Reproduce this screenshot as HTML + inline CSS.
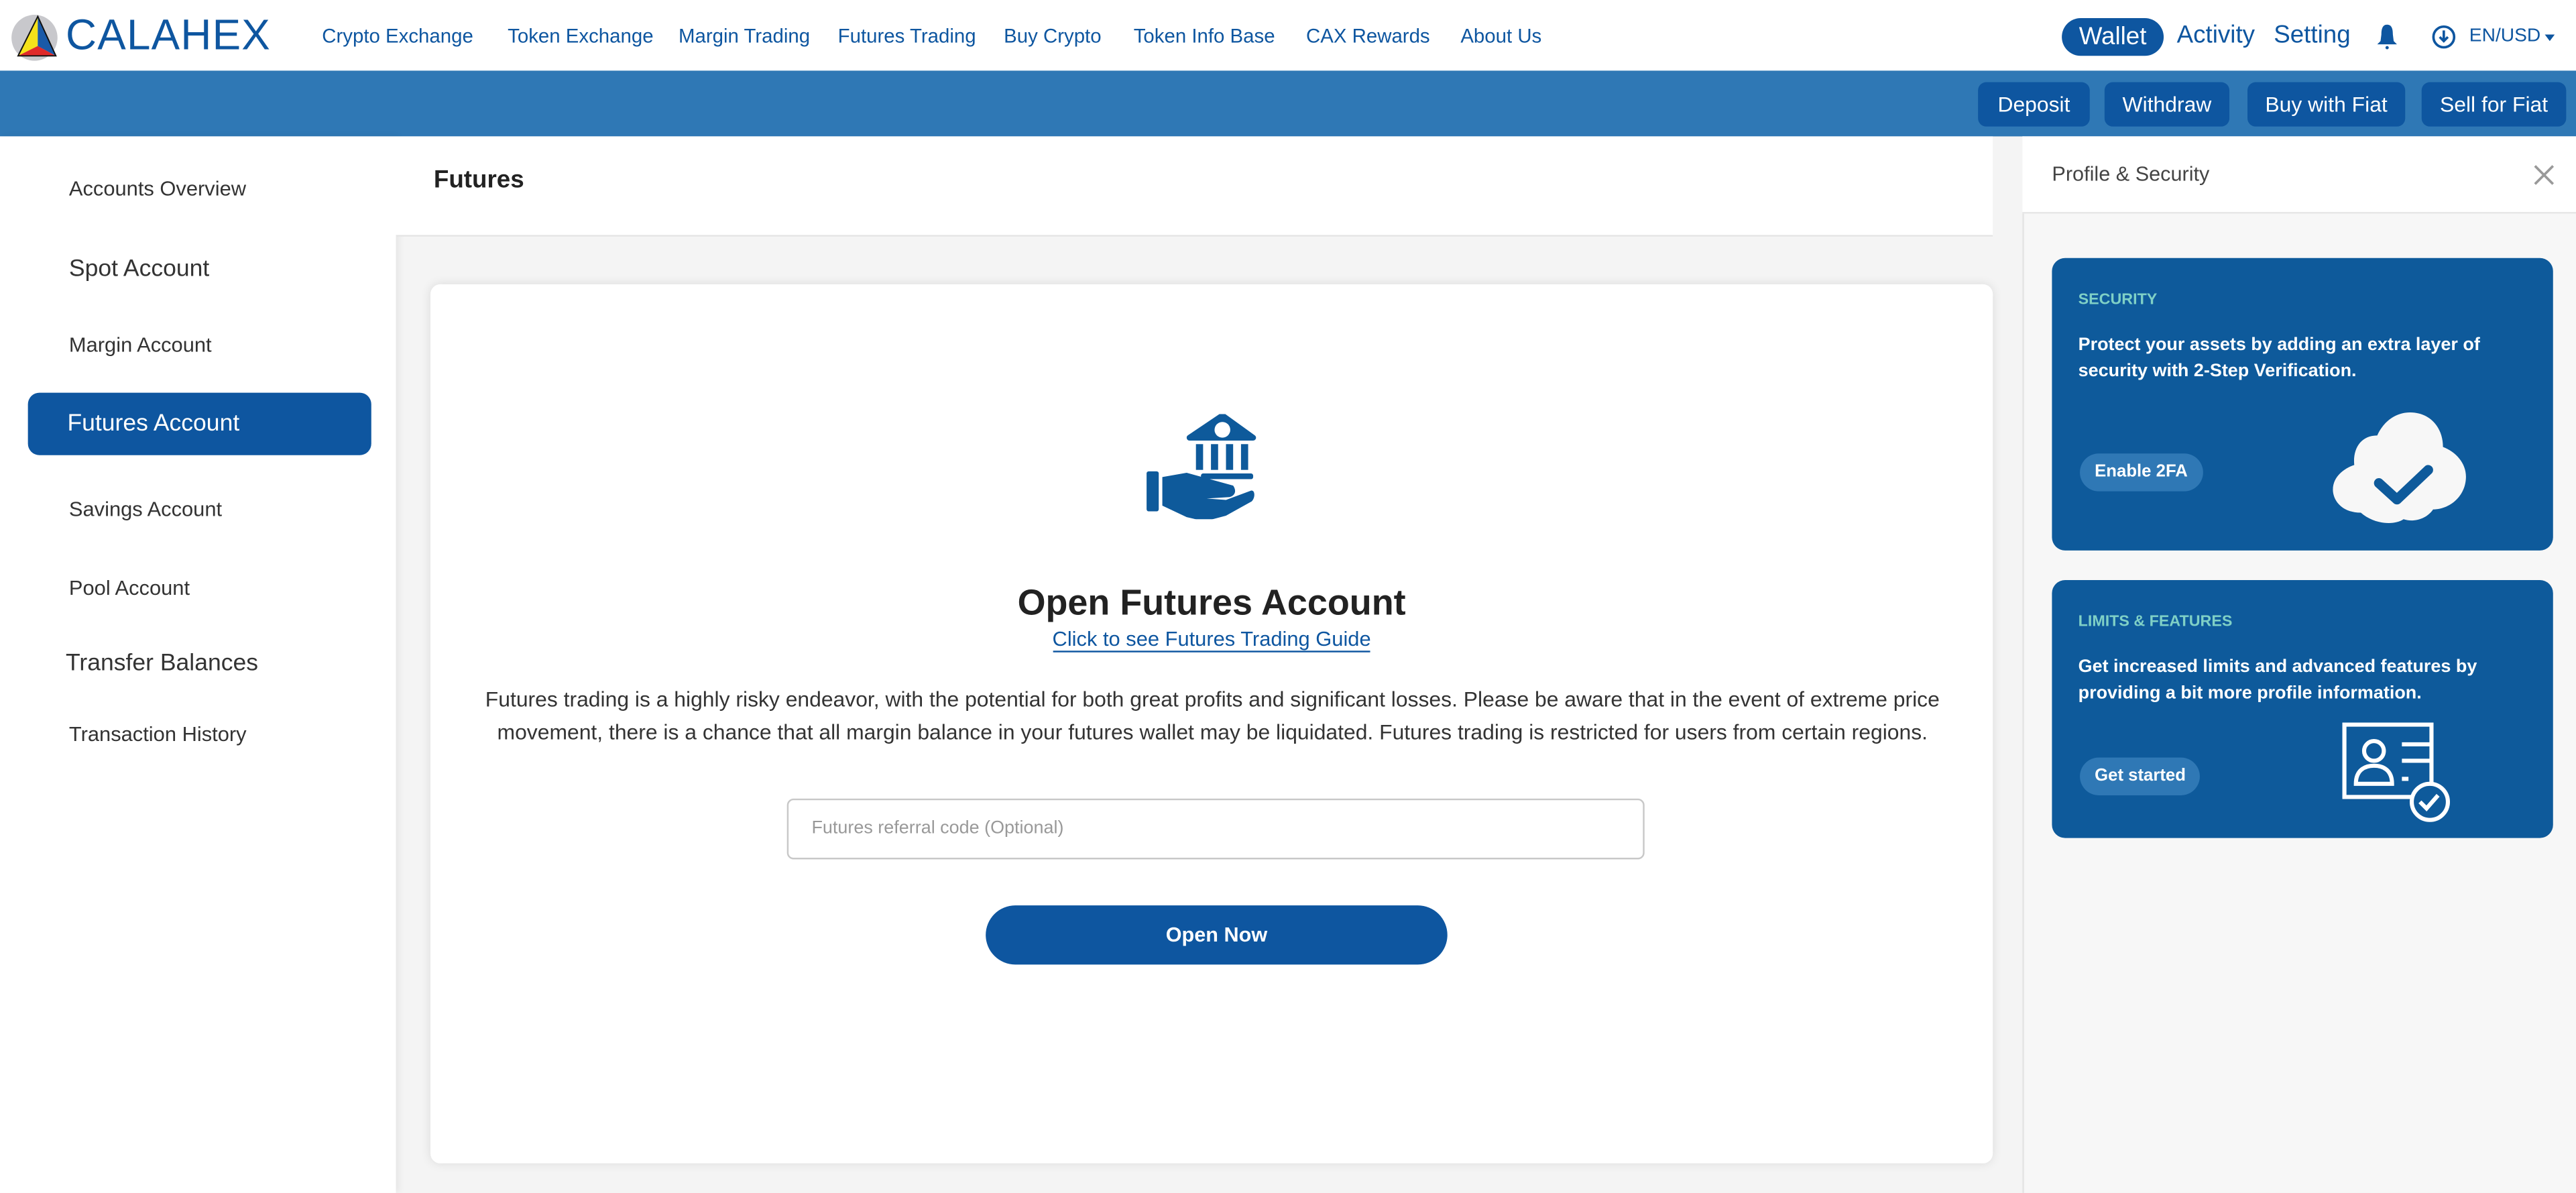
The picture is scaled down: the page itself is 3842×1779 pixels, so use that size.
<!DOCTYPE html>
<html><head><meta charset="utf-8"><style>
*{margin:0;padding:0;box-sizing:border-box}
html,body{width:3842px;height:1778px;overflow:hidden;background:#f5f5f5}
#w{position:absolute;left:0;top:0;width:1568px;height:726px;transform:scale(2.4503);transform-origin:0 0;font-family:"Liberation Sans",sans-serif;background:#f4f4f4}
.a{position:absolute}
.nav a{position:absolute;top:15px;font-size:12px;color:#0e56a0;text-decoration:none}
.btn{position:absolute;top:50px;height:27px;background:#0e56a0;color:#fff;border-radius:5px;font-size:13px;line-height:27px;text-align:center}
.side div{position:absolute;left:42px;color:#333;font-size:12.6px}
.card{position:absolute;left:1249px;width:305px;background:#0e5a9b;border-radius:8px;color:#fff}
.card .t{position:absolute;left:16px;font-size:9.5px;font-weight:bold;color:#7fd0c6}
.card .p{position:absolute;left:16px;font-size:11px;font-weight:bold;line-height:16px}
.card .b{position:absolute;left:17px;background:#2f78b5;border-radius:12px;font-size:10.5px;font-weight:bold;padding:0 9px;height:23px;line-height:23px}
</style></head><body><div id="w">
<div class="a" style="left:0;top:0;width:1568px;height:43px;background:#fff"></div>
<svg class="a" style="left:6px;top:6px" width="32" height="32" viewBox="0 0 32 32"><ellipse cx="15" cy="17" rx="14" ry="14" fill="#c8c8cc"/><polygon points="17,4 5,28 17,22" fill="#f5e21a"/><polygon points="17,4 28,28 17,22" fill="#1a5aa8"/><polygon points="5,28 17,22 28,28" fill="#e02a2a"/><polygon points="17,4 5,28 28,28" fill="none" stroke="#111" stroke-width="0.8"/></svg>
<div class="a" style="left:40px;top:6px;font-size:26px;color:#0e56a0;letter-spacing:0.5px">CALAHEX</div>
<div class="nav"><a style="left:196px">Crypto Exchange</a><a style="left:309px">Token Exchange</a><a style="left:413px">Margin Trading</a><a style="left:510px">Futures Trading</a><a style="left:611px">Buy Crypto</a><a style="left:690px">Token Info Base</a><a style="left:795px">CAX Rewards</a><a style="left:889px">About Us</a></div>
<div class="a" style="left:1255px;top:11px;width:62px;height:23px;border-radius:12px;background:#0e56a0;color:#fff;font-size:15px;text-align:center;line-height:23px">Wallet</div>
<div class="a" style="left:1325px;top:13px;font-size:15px;color:#0e56a0">Activity</div>
<div class="a" style="left:1384px;top:13px;font-size:15px;color:#0e56a0">Setting</div>
<svg class="a" style="left:1446px;top:14px" width="14" height="16" viewBox="0 0 14 16"><path d="M7 1C4 1 3.5 4 3.5 7L3 11L1 13H13L11 11L10.5 7C10.5 4 10 1 7 1Z" fill="#0e56a0"/><circle cx="7" cy="15" r="1" fill="#0e56a0"/></svg>
<svg class="a" style="left:1480px;top:15px" width="15" height="15" viewBox="0 0 15 15"><circle cx="7.5" cy="7.5" r="6.3" fill="none" stroke="#0e56a0" stroke-width="1.5"/><path d="M7.5 3.5V10M5 7.5L7.5 10L10 7.5" fill="none" stroke="#0e56a0" stroke-width="1.5"/></svg>
<div class="a" style="left:1503px;top:16px;font-size:11.5px;color:#0e56a0">EN/USD</div>
<div class="a" style="left:1549px;top:21px;border-left:3.5px solid transparent;border-right:3.5px solid transparent;border-top:4px solid #0e56a0"></div>
<div class="a" style="left:0;top:43px;width:1568px;height:40px;background:#2f78b5"></div>
<div class="btn" style="left:1204px;width:68px">Deposit</div>
<div class="btn" style="left:1281px;width:76px">Withdraw</div>
<div class="btn" style="left:1368px;width:96px">Buy with Fiat</div>
<div class="btn" style="left:1474px;width:88px">Sell for Fiat</div>
<div class="a" style="left:0;top:83px;width:241px;height:643px;background:#fff;box-shadow:2px 0 4px rgba(0,0,0,.06)"></div>
<div class="side">
<div style="top:108px">Accounts Overview</div>
<div style="top:156px;font-size:14.5px">Spot Account</div>
<div style="top:203px">Margin Account</div>
<div style="top:303px">Savings Account</div>
<div style="top:351px">Pool Account</div>
<div style="top:396px;left:40px;font-size:14.5px">Transfer Balances</div>
<div style="top:440px">Transaction History</div>
</div>
<div class="a" style="left:17px;top:239px;width:209px;height:38px;border-radius:7px;background:#0e56a0;color:#fff;font-size:14.5px;line-height:38px;padding-left:24px">Futures Account</div>
<div class="a" style="left:241px;top:83px;width:972px;height:61px;background:#fff;border-bottom:1px solid #e4e4e4"></div>
<div class="a" style="left:264px;top:101px;font-size:15px;font-weight:bold;color:#222">Futures</div>
<div class="a" style="left:262px;top:173px;width:951px;height:535px;background:#fff;border-radius:6px;box-shadow:0 0 6px rgba(0,0,0,.1)"></div>
<svg class="a" style="left:697px;top:252px" width="68" height="64" viewBox="62 38 156 147"><polygon points="170,40 213,71 124,71" fill="#0e5a9b" stroke="#0e5a9b" stroke-width="8" stroke-linejoin="round"/><circle cx="170" cy="60" r="11" fill="#fff"/><rect x="133" y="80" width="10" height="36" fill="#0e5a9b"/><rect x="154" y="80" width="10" height="36" fill="#0e5a9b"/><rect x="175" y="80" width="10" height="36" fill="#0e5a9b"/><rect x="196" y="80" width="10" height="36" fill="#0e5a9b"/><rect x="140" y="121" width="73" height="8" rx="3" fill="#0e5a9b"/><rect x="64" y="118" width="17" height="56" rx="3" fill="#0e5a9b"/><path d="M86 126L120 120L185 138C190 145 188 152 180 154L148 156L175 158L210 145C216 144 216 155 211 160L175 180L145 188L120 182L86 166Z" fill="#0e5a9b"/></svg>
<div class="a" style="left:262px;top:354px;width:951px;text-align:center;font-size:22px;font-weight:bold;color:#222">Open Futures Account</div>
<div class="a" style="left:262px;top:382px;width:951px;text-align:center;font-size:12.6px"><span style="color:#0e56a0;border-bottom:1.5px solid #0e56a0">Click to see Futures Trading Guide</span></div>
<div class="a" style="left:285px;top:416px;width:906px;text-align:center;font-size:13px;line-height:19.5px;color:#333">Futures trading is a highly risky endeavor, with the potential for both great profits and significant losses. Please be aware that in the event of extreme price movement, there is a chance that all margin balance in your futures wallet may be liquidated. Futures trading is restricted for users from certain regions.</div>
<div class="a" style="left:479px;top:486px;width:522px;height:37px;border:1px solid #c8c8c8;border-radius:4px;font-size:11px;color:#999;line-height:35px;padding-left:14px">Futures referral code (Optional)</div>
<div class="a" style="left:600px;top:551px;width:281px;height:36px;border-radius:18px;background:#0e56a0;color:#fff;font-size:12.5px;font-weight:bold;text-align:center;line-height:36px">Open Now</div>
<div class="a" style="left:1231px;top:83px;width:337px;height:643px;background:#f7f7f7;border-left:1px solid #e4e4e4"></div>
<div class="a" style="left:1231px;top:83px;width:337px;height:47px;background:#fff;border-bottom:1px solid #e6e6e6"></div>
<div class="a" style="left:1249px;top:99px;font-size:12.5px;color:#444">Profile &amp; Security</div>
<svg class="a" style="left:1542px;top:100px" width="13" height="13" viewBox="0 0 13 13"><path d="M1 1L12 12M12 1L1 12" stroke="#999" stroke-width="1.5"/></svg>
<div class="card" style="top:157px;height:178px">
<div class="t" style="top:20px">SECURITY</div>
<div class="p" style="top:45px">Protect your assets by adding an extra layer of<br>security with 2-Step Verification.</div>
<div class="b" style="top:119px">Enable 2FA</div>
<svg class="a" style="left:170px;top:93px" width="84" height="70" viewBox="0 0 84 70"><path d="M18 62C6 62 1 54 1 48C1 40 8 35 14 33C13 23 18 15 28 15C31 8 38 1 48 1C60 1 68 10 68 22C76 25 82 32 82 40C82 52 72 60 62 60C58 66 50 68 44 66C38 70 26 69 18 62Z" fill="#f7f7f7"/><path d="M29 44L40 54L59 36" fill="none" stroke="#0e5a9b" stroke-width="6" stroke-linecap="round" stroke-linejoin="round"/></svg>
</div>
<div class="card" style="top:353px;height:157px">
<div class="t" style="top:20px">LIMITS &amp; FEATURES</div>
<div class="p" style="top:45px">Get increased limits and advanced features by<br>providing a bit more profile information.</div>
<div class="b" style="top:108px">Get started</div>
<svg class="a" style="left:176px;top:86px" width="70" height="64" viewBox="0 0 70 64"><path d="M55 48V2H2V46H47" fill="none" stroke="#fff" stroke-width="2.5"/><circle cx="20" cy="18" r="6" fill="none" stroke="#fff" stroke-width="2.5"/><path d="M9 38C9 30 14 27 20 27C26 27 31 30 31 38Z" fill="none" stroke="#fff" stroke-width="2.5"/><path d="M37 14H55M37 24H55M37 35H41" stroke="#fff" stroke-width="2.5"/><circle cx="54" cy="49" r="11" fill="#0e5a9b" stroke="#fff" stroke-width="2.5"/><path d="M48 49L52 53L59 45" fill="none" stroke="#fff" stroke-width="2.5"/></svg>
</div>
</div></body></html>
